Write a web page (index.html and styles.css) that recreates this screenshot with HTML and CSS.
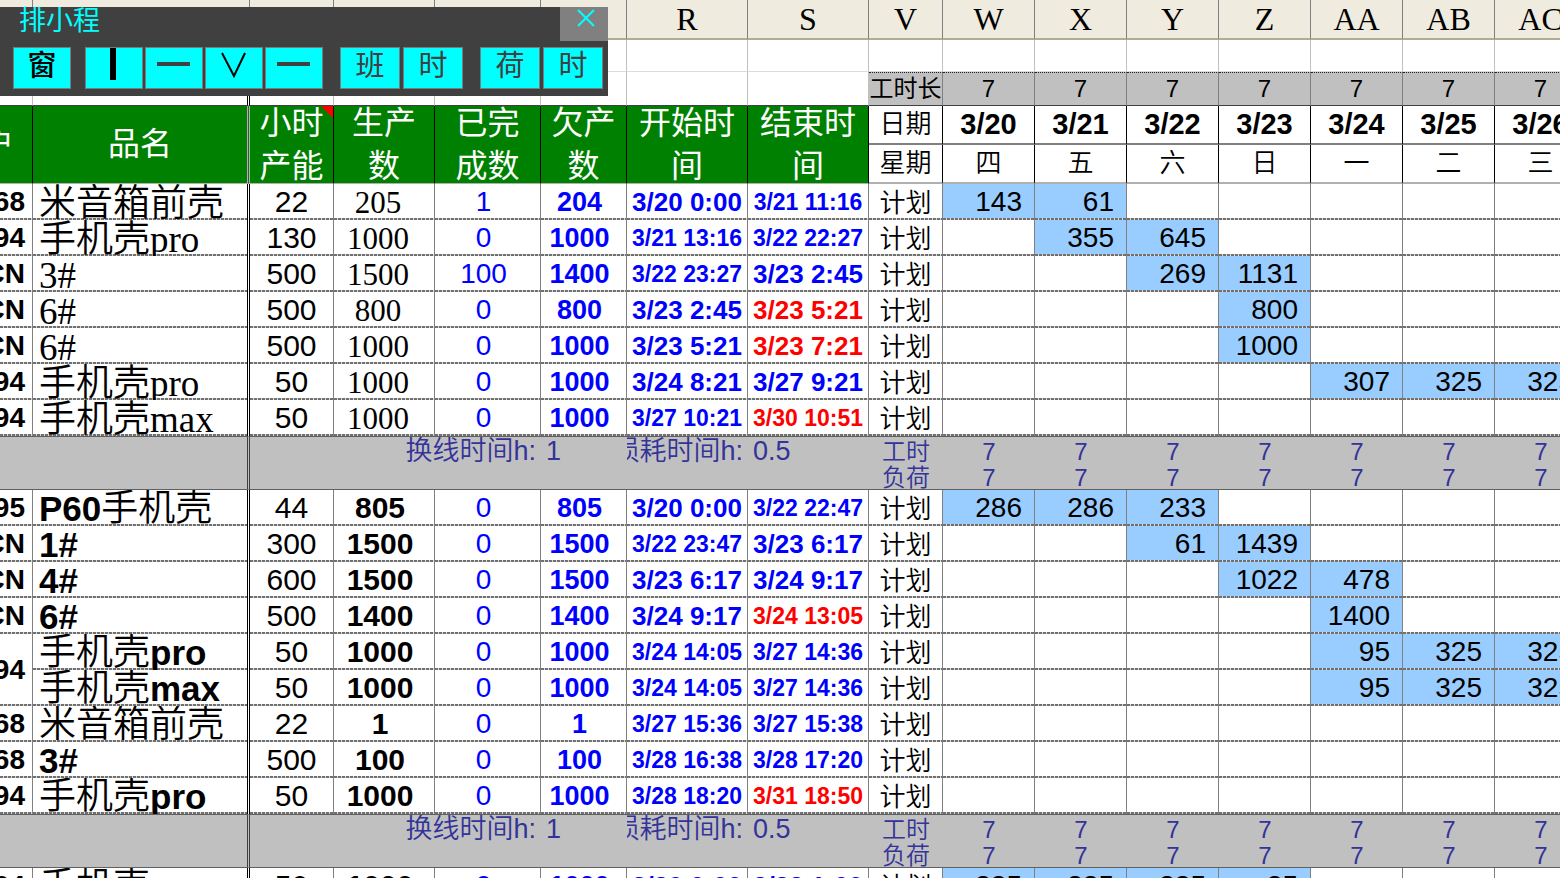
FILE: index.html
```html
<!DOCTYPE html>
<html lang="zh-CN">
<head>
    <meta charset="UTF-8">
    <meta name="viewport" content="width=device-width, initial-scale=1.0">
    <title>排小程</title>

    <link rel="stylesheet" href="styles.css">
</head>
<body>
    <div class="sheet">
        <table class="grid">
            <colgroup>
                <col class="col-client">
                <col class="col-name">
                <col class="col-rate">
                <col class="col-qty">
                <col class="col-done">
                <col class="col-owed">
                <col class="col-time">
                <col class="col-time">
                <col class="col-kind">
                <col span="7">
            </colgroup>
            <thead>
                <tr class="letters">
                    <th></th><th></th><th></th><th></th><th></th><th></th>
                    <th>R</th><th>S</th><th>V</th><th>W</th><th>X</th><th>Y</th><th>Z</th><th>AA</th><th>AB</th><th>AC</th>
                </tr>
                <tr class="blank">
                    <td></td><td class="name"></td><td></td><td></td><td></td><td></td><td></td><td></td>
                    <td></td><td></td><td></td><td></td><td></td><td></td><td></td><td></td>
                </tr>
                <tr class="hours">
                    <td></td><td class="name"></td><td></td><td></td><td></td><td></td><td></td><td></td>
                    <th class="work">工时长</th>
                    <td class="work">7</td><td class="work">7</td><td class="work">7</td><td class="work">7</td><td class="work">7</td><td class="work">7</td><td class="work">7</td>
                </tr>
                <tr class="dates">
                    <th rowspan="2" class="head client"><div class="clip">客户</div></th>
                    <th rowspan="2" class="head name"><div class="title">品名</div></th>
                    <th rowspan="2" class="head note"><div class="wrap">小时<br>产能</div></th>
                    <th rowspan="2" class="head"><div class="wrap">生产<br>数</div></th>
                    <th rowspan="2" class="head"><div class="wrap">已完<br>成数</div></th>
                    <th rowspan="2" class="head"><div class="wrap">欠产<br>数</div></th>
                    <th rowspan="2" class="head"><div class="wrap">开始时<br>间</div></th>
                    <th rowspan="2" class="head"><div class="wrap">结束时<br>间</div></th>
                    <th class="label">日期</th>
                    <th>3/20</th><th>3/21</th><th>3/22</th><th>3/23</th><th>3/24</th><th>3/25</th><th>3/26</th>
                </tr>
                <tr class="weekdays">
                    <th>星期</th>
                    <td>四</td><td>五</td><td>六</td><td>日</td><td>一</td><td>二</td><td>三</td>
                </tr>
            </thead>
            <tbody id="rows"></tbody>
        </table>
    </div>

    <div class="toolbar">
        <div class="toolbar-title">
            <span>排小程</span>
            <button type="button" class="close" aria-label="关闭">
                <svg width="18" height="18" viewBox="0 0 18 18"><path d="M1 1L17 17M17 1L1 17" stroke="#00ffff" stroke-width="2" fill="none"/></svg>
            </button>
        </div>
        <div class="toolbar-buttons">
            <div class="group">
                <button type="button" class="strong">窗</button>
            </div>
            <div class="group">
                <button type="button" aria-label="竖线"><svg width="56" height="40" viewBox="0 0 56 40"><path d="M27 0V32" stroke="#000" stroke-width="6"/></svg></button>
                <button type="button" aria-label="横线"><svg width="56" height="40" viewBox="0 0 56 40"><path d="M11 16H44" stroke="#404040" stroke-width="4"/></svg></button>
                <button type="button" aria-label="展开"><svg width="56" height="40" viewBox="0 0 56 40"><path d="M16 5L28 28L39 5" stroke="#000" stroke-width="2" fill="none"/></svg></button>
                <button type="button" aria-label="收起"><svg width="56" height="40" viewBox="0 0 56 40"><path d="M11 16H44" stroke="#404040" stroke-width="4"/></svg></button>
            </div>
            <div class="group wide">
                <button type="button">班</button>
                <button type="button">时</button>
            </div>
            <div class="group wide">
                <button type="button">荷</button>
                <button type="button">时</button>
            </div>
        </div>
    </div>

    <script src="script.js"></script>
</body>
</html>
```
FILE: styles.css
```css
* {
    margin: 0;
    padding: 0;
    box-sizing: border-box;
}

body {
    font-family: "Liberation Sans", "Noto Sans CJK SC", sans-serif;
    background: #fff;
    color: #000;
    overflow: hidden;
}

.sheet {
    height: 100vh;
    overflow: hidden;
}

/* the last day column runs past the window edge */
.grid {
    width: calc(100% + 27px);
    min-width: 1400px;
    table-layout: fixed;
    border-collapse: separate;
    border-spacing: 0;
}

.col-client { width: 33px; }
.col-name { width: 217px; }
.col-rate { width: 84px; }
.col-qty { width: 101px; }
.col-done { width: 106px; }
.col-owed { width: 86px; }
.col-time { width: 121px; }
.col-kind { width: 74px; }

.grid th,
.grid td {
    overflow: hidden;
    white-space: nowrap;
    text-align: center;
    border-right: 1px solid #808080;
}

.grid .name {
    border-right: 3px double #000;
}

/* column letters and the rows above the header */
.letters th {
    height: 40px;
    background: #efebde;
    border-bottom: 2px solid #b0ad90;
    font-family: "Liberation Serif", serif;
    font-size: 32px;
    line-height: 38px;
    font-weight: 400;
}

.blank td {
    height: 32px;
    border-right-color: #c0c0c0;
    border-bottom: 1px solid #dcdcdc;
}

.hours th,
.hours td {
    height: 34px;
    border-right-color: #c0c0c0;
    border-bottom: 1px solid #404040;
}

.hours .work {
    background: #c0c0c0;
    border-top: 1px dotted #202020;
    border-right-color: #808080;
    font-size: 24px;
    line-height: 32px;
    font-weight: 400;
}

.dates th,
.weekdays th,
.weekdays td {
    height: 39px;
    border-right-color: #000;
    border-bottom: 2px solid #808080;
    font-size: 26px;
    line-height: 37px;
    font-weight: 350;
}

.dates th {
    font-size: 29px;
    font-weight: 700;
}

.dates .label {
    font-size: 26px;
    font-weight: 350;
}

.weekdays th,
.weekdays td {
    border-bottom-color: #b0b0b0;
}

/* green header */
.dates .head {
    position: relative;
    background: #008000;
    color: #fff;
    border-bottom: 1px solid #b0b0b0;
    font-size: 32px;
    line-height: 43px;
    font-weight: 400;
}

.head .wrap {
    display: grid;
    align-content: center;
    height: 77px;
    overflow: hidden;
}

.grid .name.head {
    border-right-color: #c8a0c8;
}

.head .clip {
    padding-right: 18px;
}

.note::after {
    content: '';
    position: absolute;
    top: 0;
    right: 0;
    width: 12px;
    height: 12px;
    background: #f00;
    clip-path: polygon(0 0, 100% 0, 100% 100%);
}

.clip {
    display: flex;
    justify-content: flex-end;
    overflow: hidden;
}

/* order rows */
.order td {
    height: 36px;
    line-height: 36px;
    font-size: 28px;
    background: repeating-linear-gradient(90deg, #707070 0 3px, #d8d8d8 3px 4px) bottom / 100% 2px no-repeat;
}

.order .client {
    font-weight: 700;
}

.order .client .clip {
    padding-right: 7px;
}

.order .name {
    padding-top: 4px;
    padding-left: 6px;
    text-align: left;
    font-family: "Liberation Serif", "Noto Sans CJK SC", serif;
    font-size: 37px;
    font-weight: 350;
    line-height: 32px;
}

.order .rate {
    font-size: 30px;
}

.order .qty {
    padding-top: 2px;
    padding-right: 12px;
    font-family: "Liberation Serif", serif;
    font-size: 31px;
    line-height: 34px;
}

.order .done,
.order .owed {
    padding-right: 8px;
    color: #00f;
}

.order .owed {
    font-size: 27px;
    font-weight: 700;
}

.order .time {
    font-size: 26px;
    font-weight: 700;
    color: #00f;
}

.order .time.long {
    font-size: 23px;
}

.order .time.late {
    color: #f00;
}

.order .kind {
    padding-top: 2px;
    font-size: 26px;
    font-weight: 350;
    line-height: 34px;
}

.order .day {
    padding-right: 12px;
    text-align: right;
}

.order .planned {
    background-color: #99ccff;
}

.bold .name {
    padding-top: 2px;
    line-height: 34px;
}

.bold .name b {
    font-family: "Liberation Sans", sans-serif;
    font-size: 35px;
    font-weight: 700;
}

.bold .qty {
    padding-top: 0;
    padding-right: 8px;
    font-family: "Liberation Sans", sans-serif;
    font-size: 30px;
    font-weight: 700;
    line-height: 36px;
}

/* grey line totals */
.total td,
.total th {
    height: 27px;
    background: #c0c0c0;
    color: #333399;
    border-right: 0;
    font-size: 24px;
    font-weight: 350;
}

.total .line {
    height: 26px;
    line-height: 30px;
    overflow: hidden;
}

.total .setting {
    font-size: 27px;
    line-height: 28px;
    vertical-align: top;
    text-align: right;
}

.total .setting.value {
    padding-left: 5px;
    text-align: left;
}

.total .setting.label {
    padding-right: 5px;
}

.total.first td,
.total.first th {
    border-top: 1px solid #606060;
}

.total.last td,
.total.last th,
.total .tall {
    border-bottom: 1px solid #606060;
}

.total .name {
    border-right: 3px double #404040;
}

/* floating tool window */
.toolbar {
    position: absolute;
    top: 7px;
    left: 0;
    width: 608px;
    height: 89px;
    background: #404040;
}

.toolbar-title {
    display: flex;
    justify-content: space-between;
    height: 34px;
    padding-left: 19px;
    color: #0ff;
    font-size: 27px;
    line-height: 28px;
}

.toolbar button {
    border: 1px solid #708080;
    background: #0ff;
    color: #404040;
    font-family: "Liberation Sans", "Noto Sans CJK SC", sans-serif;
    font-size: 29px;
    line-height: 36px;
    cursor: pointer;
}

.toolbar .close {
    display: flex;
    justify-content: center;
    width: 48px;
    padding-top: 2px;
    padding-left: 4px;
    border: 0;
    background: #808080;
}

.toolbar-buttons {
    display: flex;
    gap: 17px;
    padding: 6px 5px 0 13px;
}

.group {
    display: flex;
    gap: 2px;
}

.group button {
    display: flex;
    justify-content: center;
    width: 58px;
    height: 42px;
}

.group:first-child {
    margin-right: -3px;
}

.wide {
    gap: 3px;
}

.wide button {
    width: 60px;
}

.toolbar .strong {
    color: #000;
    font-weight: 500;
}
```
FILE: script.js
```js
// client, name, rate, qty, done, owed, start, end, late, first planned day, planned quantities
const lines = [
    {
        bold: false,
        orders: [
            ['568', '米音箱前壳', 22, 205, 1, 204, '3/20 0:00', '3/21 11:16', false, 0, [143, 61]],
            ['594', '手机壳pro', 130, 1000, 0, 1000, '3/21 13:16', '3/22 22:27', false, 1, [355, 645]],
            ['CN', '3#', 500, 1500, 100, 1400, '3/22 23:27', '3/23 2:45', false, 2, [269, 1131]],
            ['CN', '6#', 500, 800, 0, 800, '3/23 2:45', '3/23 5:21', true, 3, [800]],
            ['CN', '6#', 500, 1000, 0, 1000, '3/23 5:21', '3/23 7:21', true, 3, [1000]],
            ['594', '手机壳pro', 50, 1000, 0, 1000, '3/24 8:21', '3/27 9:21', false, 4, [307, 325, 325]],
            ['594', '手机壳max', 50, 1000, 0, 1000, '3/27 10:21', '3/30 10:51', true, 0, []]
        ]
    },
    {
        bold: true,
        orders: [
            ['595', 'P60手机壳', 44, 805, 0, 805, '3/20 0:00', '3/22 22:47', false, 0, [286, 286, 233]],
            ['CN', '1#', 300, 1500, 0, 1500, '3/22 23:47', '3/23 6:17', false, 2, [61, 1439]],
            ['CN', '4#', 600, 1500, 0, 1500, '3/23 6:17', '3/24 9:17', false, 3, [1022, 478]],
            ['CN', '6#', 500, 1400, 0, 1400, '3/24 9:17', '3/24 13:05', true, 4, [1400]],
            ['594', '手机壳pro', 50, 1000, 0, 1000, '3/24 14:05', '3/27 14:36', false, 4, [95, 325, 325]],
            [null, '手机壳max', 50, 1000, 0, 1000, '3/24 14:05', '3/27 14:36', false, 4, [95, 325, 325]],
            ['568', '米音箱前壳', 22, 1, 0, 1, '3/27 15:36', '3/27 15:38', false, 0, []],
            ['568', '3#', 500, 100, 0, 100, '3/28 16:38', '3/28 17:20', false, 0, []],
            ['594', '手机壳pro', 50, 1000, 0, 1000, '3/28 18:20', '3/31 18:50', true, 0, []]
        ]
    },
    {
        bold: true,
        open: true,
        orders: [
            ['594', '手机壳pro', 50, 1000, 0, 1000, '3/20 0:00', '3/23 1:00', false, 0, [325, 325, 325, 25]]
        ]
    }
];

const DAYS = 7;

function timeCell(text, late) {
    const cls = 'time' + (text.length > 9 ? ' long' : '') + (late ? ' late' : '');
    return `<td class="${cls}">${text}</td>`;
}

function orderRow(order, next, bold) {
    const [client, name, rate, qty, done, owed, start, end, late, first, plan] = order;
    let html = `<tr class="order${bold ? ' bold' : ''}">`;
    // a null client is merged with the row above
    if (client !== null) {
        const span = next && next[0] === null ? ' rowspan="2"' : '';
        html += `<td class="client"${span}><div class="clip">${client}</div></td>`;
    }
    const label = bold ? name.replace(/[A-Za-z0-9#]+/g, '<b>$&</b>') : name;
    html += `<td class="name">${label}</td><td class="rate">${rate}</td><td class="qty">${qty}</td>`;
    html += `<td class="done">${done}</td><td class="owed">${owed}</td>`;
    html += timeCell(start, false) + timeCell(end, late) + '<td class="kind">计划</td>';
    for (let d = 0; d < DAYS; d++) {
        const value = plan[d - first];
        html += value === undefined ? '<td class="day"></td>' : `<td class="day planned">${value}</td>`;
    }
    return html + '</tr>';
}

function totalRows() {
    const hours = '<td><div class="line">7</div></td>'.repeat(DAYS);
    return `<tr class="total first">
        <td rowspan="2" class="tall"></td><td rowspan="2" class="tall name"></td>
        <th rowspan="2" colspan="3" class="tall setting label">换线时间h:</th>
        <td rowspan="2" class="tall setting value">1</td>
        <th rowspan="2" class="tall setting label"><div class="clip">损耗时间h:</div></th>
        <td rowspan="2" class="tall setting value">0.5</td>
        <th><div class="line">工时</div></th>${hours}
    </tr>
    <tr class="total last"><th><div class="line">负荷</div></th>${hours}</tr>`;
}

document.getElementById('rows').innerHTML = lines.map((line) => {
    const rows = line.orders.map((order, i) => orderRow(order, line.orders[i + 1], line.bold)).join('');
    return rows + (line.open ? '' : totalRows());
}).join('');
```
